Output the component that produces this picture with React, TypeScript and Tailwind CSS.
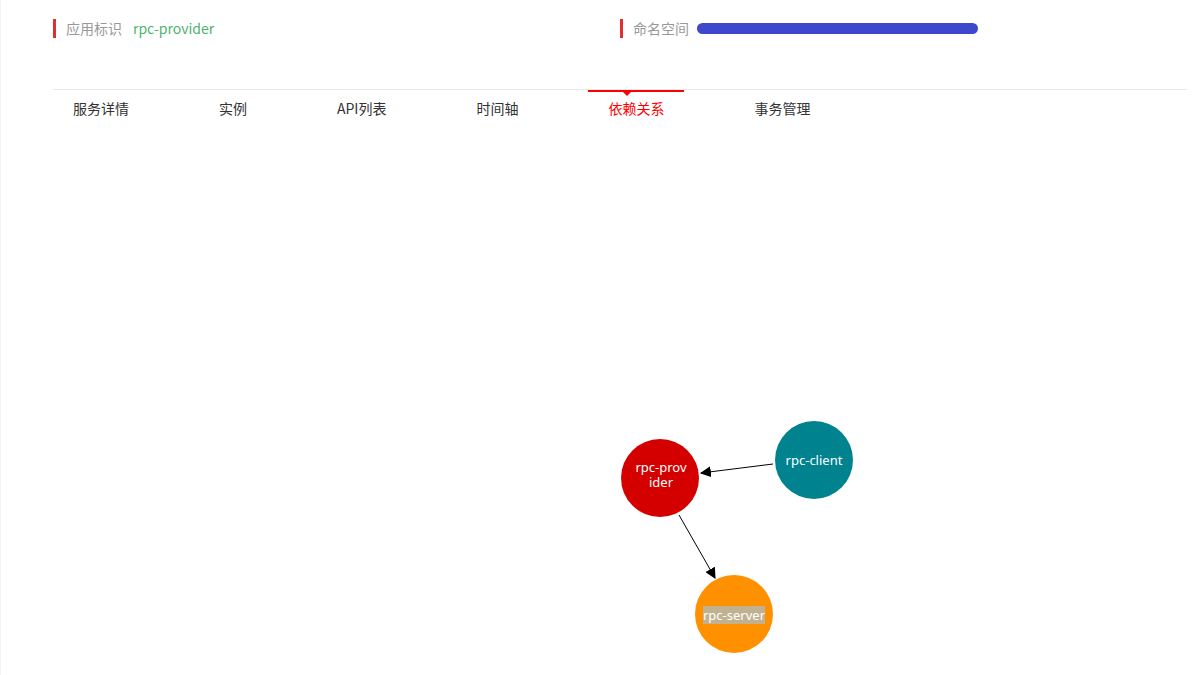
import React from 'react';

const tabs = ['服务详情', '实例', 'API列表', '时间轴', '依赖关系', '事务管理'];

function DependencyGraph() {
  return (
    <svg width="1134" height="548" className="block">
      <defs>
        <marker id="arrow" viewBox="0 0 10 10" refX="9" refY="5" markerWidth="11" markerHeight="11" markerUnits="userSpaceOnUse" orient="auto">
          <path d="M0,0 L10,5 L0,10 z" fill="#000" />
        </marker>
      </defs>
      <line x1="720" y1="337" x2="648" y2="346" stroke="#000" strokeWidth="1" markerEnd="url(#arrow)" />
      <line x1="626" y1="388" x2="662" y2="451" stroke="#000" strokeWidth="1" markerEnd="url(#arrow)" />
      <g fontFamily="'Noto Sans', 'Open Sans', sans-serif" fontSize="13" fill="#fff" textAnchor="middle">
        <circle cx="607" cy="351" r="39" fill="#d40000" />
        <text x="608" y="345">rpc-prov</text>
        <text x="608" y="360">ider</text>
        <circle cx="761" cy="333" r="39" fill="#00838f" />
        <text x="761" y="338">rpc-client</text>
        <circle cx="681" cy="487" r="39" fill="#ff9100" />
        <rect x="650" y="479" width="62" height="18" fill="#c0b291" />
        <text x="681" y="493">rpc-server</text>
      </g>
    </svg>
  );
}

export default function App() {
  return (
    <div className="w-full h-[675px] overflow-hidden bg-white border-l border-[#f4f4f4]" style={{ fontFamily: "'Noto Sans CJK SC', 'Noto Sans', sans-serif" }}>
      <div className="pl-[52px] pr-[12px]">
        <div className="grid grid-cols-2 pt-[19px] h-[89px]">
          <div className="flex items-center h-[19px] border-l-[3px] border-[#e0302d] pl-[10px] text-[14px]">
            <span className="text-[#999]">应用标识</span>
            <span className="ml-[11px] text-[#4fb36f]">rpc-provider</span>
          </div>
          <div className="flex items-center h-[19px] border-l-[3px] border-[#e0302d] pl-[10px] text-[14px]">
            <span className="text-[#999]">命名空间</span>
            <span className="ml-[8px] w-[281px] h-[11px] rounded-full bg-[#3f48cc]" />
          </div>
        </div>
        <div className="border-t border-[#e8e8e8] flex gap-[50px] h-[38px]">
          {tabs.map((t) => {
            const active = t === '依赖关系';
            return (
              <div key={t} className={`relative px-5 flex items-center text-[14px] ${active ? 'text-[#ff0000]' : 'text-[#333]'}`}>
                {active && (
                  <>
                    <span className="absolute left-0 right-0 top-0 h-[2px] bg-[#ff0000]" />
                    <span className="absolute left-[35px] top-[2px] w-0 h-0 border-l-[4px] border-r-[4px] border-t-[4px] border-l-transparent border-r-transparent border-t-[#ff0000]" />
                  </>
                )}
                {t}
              </div>
            );
          })}
        </div>
        <DependencyGraph />
      </div>
    </div>
  );
}
